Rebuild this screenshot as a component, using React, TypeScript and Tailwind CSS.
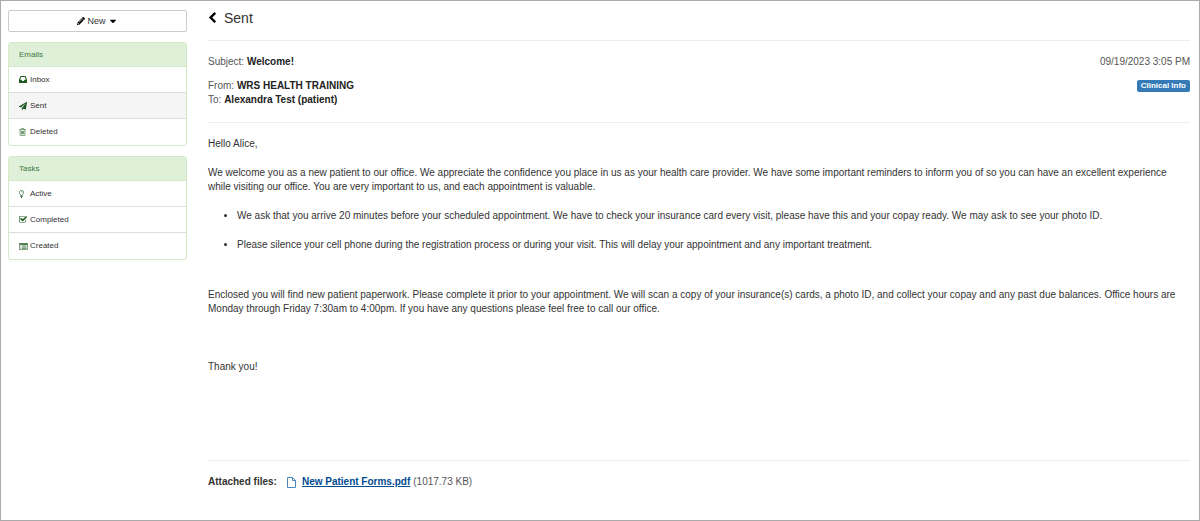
import type { ReactNode } from "react";
import { FaCaretDown, FaPaperPlane, FaPencilAlt } from "react-icons/fa";

type Item = { label: string; icon: ReactNode; active?: boolean };

const InboxIcon = () => (
  <svg viewBox="0 0 16 14" className="w-2 h-[7px]" fill="currentColor" fillRule="evenodd">
    <path d="M3.6 0h8.8q.8 0 1.100.8L16 7.400V13q0 1-1 1H1q-1 0-1-1V7.400L2.500.8Q2.800 0 3.600 0ZM4.400 2 2.400 7.400H5.200L6.400 9.800H9.600L10.800 7.400H13.600L11.600 2Z" />
  </svg>
);

const TrashIcon = () => (
  <svg viewBox="0 0 14 16" className="w-[7px] h-2" fill="none" stroke="currentColor" strokeWidth="1.2">
    <path d="M.5 3.200h13M4.500 3 5.300 1h3.400l.8 2M2.200 3.500V14q0 1.300 1.200 1.300h7.200q1.200 0 1.200-1.300V3.500M5 6v6.500M7 6v6.500M9 6v6.500" />
  </svg>
);

const BulbIcon = () => (
  <svg viewBox="0 0 10 16" className="w-[5px] h-2" fill="none" stroke="currentColor" strokeWidth="1.3">
    <path d="M3.300 10.500C3.300 8.500.7 7.800.7 4.800.7 2.500 2.500.8 5 .8s4.300 1.700 4.300 4c0 3-2.600 3.700-2.600 5.700M5 3q1.800 0 2 1.800" />
    <path d="M3 11.500h4M3 13.200h4M4 15h2" strokeWidth="1.800" />
  </svg>
);

const CheckIcon = () => (
  <svg viewBox="64 192 1664 1408" className="w-2 h-[7px]" fill="currentColor">
    <path d="M1472 930v318q0 119-84.500 203.500t-203.500 84.500h-832q-119 0-203.500-84.500t-84.500-203.500v-832q0-119 84.500-203.500t203.500-84.500h832q63 0 117 25 15 7 18 23 3 17-9 29l-49 49q-10 10-23 10-3 0-9-2-23-6-45-6h-832q-66 0-113 47t-47 113v832q0 66 47 113t113 47h832q66 0 113-47t47-113v-254q0-13 9-22l64-64q10-10 23-10 6 0 12 3 20 8 20 29zm231-489l-814 814q-24 24-57 24t-57-24l-430-430q-24-24-24-57t24-57l110-110q24-24 57-24t57 24l263 263 647-647q24-24 57-24t57 24l110 110q24 24 24 57t-24 57z" />
  </svg>
);

const ListIcon = () => (
  <svg viewBox="0 0 18 14" className="w-[9px] h-[7px]" fill="none" stroke="currentColor" strokeWidth="1.300">
    <rect x=".7" y=".7" width="16.600" height="12.600" rx="1.200" />
    <path d="M1 2.200h16" strokeWidth="2.800" />
    <path d="M3 5.700h1.500M3 8.300h1.500M3 10.900h1.500M6 5.700h9M6 8.300h9M6 10.900h9" />
  </svg>
);

const BackIcon = () => (
  <svg viewBox="410 0 1036 1792" className="w-[7px] h-3" fill="currentColor">
    <path d="M1427 301l-531 531 531 531q19 19 19 45t-19 45l-166 166q-19 19-45 19t-45-19l-742-742q-19-19-19-45t19-45l742-742q19-19 45-19t45 19l166 166q19 19 19 45t-19 45z" />
  </svg>
);

const FileIcon = () => (
  <svg viewBox="0 0 18 22" className="w-[9px] h-[11px]" fill="none" stroke="currentColor" strokeWidth="1.800" strokeLinejoin="round">
    <path d="M1 1h10l6 6v14H1ZM11 1v6h6" />
  </svg>
);

const emails: Item[] = [
  { label: "Inbox", icon: <InboxIcon /> },
  { label: "Sent", icon: <FaPaperPlane />, active: true },
  { label: "Deleted", icon: <TrashIcon /> },
];

const tasks: Item[] = [
  { label: "Active", icon: <BulbIcon /> },
  { label: "Completed", icon: <CheckIcon /> },
  { label: "Created", icon: <ListIcon /> },
];

function Panel({ title, items }: { title: string; items: Item[] }) {
  return (
    <nav aria-label={title} className="rounded-[3px] border border-[#d6e9c6] overflow-hidden">
      <h2 className="bg-[#dff0d8] text-[#3c763d] px-2.5 h-6 flex items-center border-b border-[#d6e9c6]">{title}</h2>
      <ul className="divide-y divide-[#ddd]">
        {items.map(item => (
          <li key={item.label} className={`h-[26px] ${item.active ? "bg-[#f5f5f5]" : ""}`}>
            <a href="#" className="flex items-center gap-0.5 px-2.5 h-full text-[#333]">
              <span className="w-[9px] text-[8px] text-[#1f5a24]">{item.icon}</span>
              {item.label}
            </a>
          </li>
        ))}
      </ul>
    </nav>
  );
}

export default function App() {
  return (
    <div className="min-h-screen flex gap-[21px] border border-[#aaa] bg-white pl-[7px] pr-[9px] pt-[9px] font-['Liberation_Sans',Arial,sans-serif] text-[10px] leading-[14px] text-[#333]">
      <aside className="w-[179px] shrink-0 flex flex-col gap-2.5 text-[8px]">
        <button className="h-[22px] flex items-center justify-center gap-0.5 rounded-[2px] border border-[#ccc] text-[9px]">
          <FaPencilAlt className="text-[8px] text-black" />
          New
          <FaCaretDown className="text-[10px] text-black" />
        </button>
        <Panel title="Emails" items={emails} />
        <Panel title="Tasks" items={tasks} />
      </aside>

      <main className="flex-1 min-w-0">
        <header className="flex items-center gap-2 h-[31px] pb-[14px] pl-px border-b border-[#eee]">
          <button aria-label="Back" className="text-black">
            <BackIcon />
          </button>
          <h1 className="text-[14px]">Sent</h1>
        </header>

        <section className="flex justify-between pt-3.5 pb-[15px] border-b border-[#eee] text-[#555]">
          <div>
            <p className="mb-2.5">Subject: <b className="text-[#222]">Welcome!</b></p>
            <p>From: <b className="text-[#222]">WRS HEALTH TRAINING</b></p>
            <p>To: <b className="text-[#222]">Alexandra Test (patient)</b></p>
          </div>
          <div className="flex flex-col items-end gap-[11px]">
            <time>09/19/2023 3:05 PM</time>
            <button className="rounded-[2px] bg-[#337ab7] px-1 h-3 leading-3 text-[8px] font-bold text-white">Clinical Info</button>
          </div>
        </section>

        <article className="pt-3.5 pb-[86px] border-b border-[#eee]">
          <p className="mb-[15px]">Hello Alice,</p>
          <p className="mb-[15px]">
            We welcome you as a new patient to our office. We appreciate the confidence you place in us as your health care provider. We have some important reminders to inform you of so you can have an excellent experience while visiting our office. You are very important to us, and each appointment is valuable.
          </p>
          <ul className="list-disc pl-[29px] flex flex-col gap-[15px] mb-9">
            <li>We ask that you arrive 20 minutes before your scheduled appointment. We have to check your insurance card every visit, please have this and your copay ready. We may ask to see your photo ID.</li>
            <li>Please silence your cell phone during the registration process or during your visit. This will delay your appointment and any important treatment.</li>
          </ul>
          <p className="mb-11">
            Enclosed you will find new patient paperwork. Please complete it prior to your appointment. We will scan a copy of your insurance(s) cards, a photo ID, and collect your copay and any past due balances. Office hours are Monday through Friday 7:30am to 4:00pm. If you have any questions please feel free to call our office.
          </p>
          <p>Thank you!</p>
        </article>

        <footer className="flex items-center pt-3.5 text-[#555]">
          <b className="mr-2.5 text-[#333]">Attached files:</b>
          <span className="mr-1.5 text-[#337ab7]"><FileIcon /></span>
          <a href="#" className="mr-[3px] font-bold text-[#004b91] underline">New Patient Forms.pdf</a>
          (1017.73 KB)
        </footer>
      </main>
    </div>
  );
}
